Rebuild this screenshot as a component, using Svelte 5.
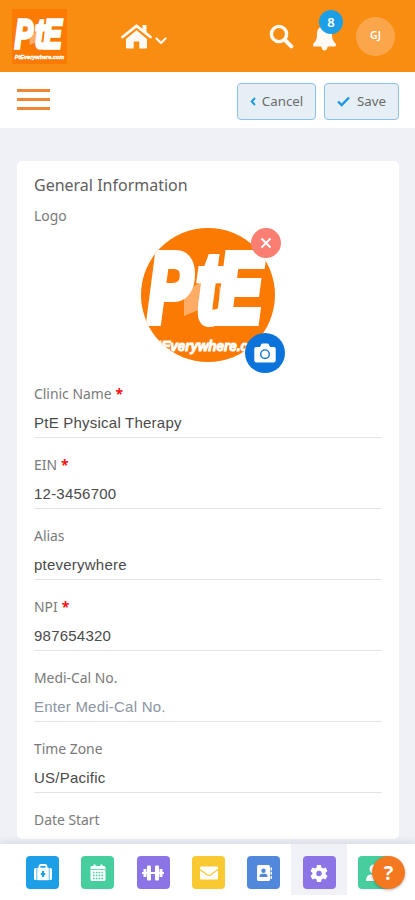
<script lang="ts">
    type Field = {
        label: string;
        value?: string;
        placeholder?: string;
        required?: boolean;
    };

    const fields: Field[] = [
        { label: 'Clinic Name', value: 'PtE Physical Therapy', required: true },
        { label: 'EIN', value: '12-3456700', required: true },
        { label: 'Alias', value: 'pteverywhere' },
        { label: 'NPI', value: '987654320', required: true },
        { label: 'Medi-Cal No.', placeholder: 'Enter Medi-Cal No.' },
        { label: 'Time Zone', value: 'US/Pacific' },
        { label: 'Date Start' },
    ];

    const apps = [
        { id: 'medkit', color: '#1c9fe6' },
        { id: 'calendar', color: '#46ce9f' },
        { id: 'dumbbell', color: '#8c73e6' },
        { id: 'mail', color: '#f8c930' },
        { id: 'contacts', color: '#5288dc' },
        { id: 'settings', color: '#8c73e6' },
        { id: 'user', color: '#46ce9f' },
    ];

    let active = $state('settings');
</script>

{#snippet wordmark()}
    <rect width="134" height="134" fill="#fb7a03" />
    <path d="M43 64 L60 54 L62 80 L43 88Z" fill="#ffad66" />
    <path d="M78 58 L90 67 L78 77Z" fill="#ffa052" />
    <text class="mark" transform="scale(0.68 1)" x="10 82 113" y="94">PtE</text>
    <text class="site" x="7" y="123" textLength="120" lengthAdjust="spacingAndGlyphs">PtEverywhere.com</text>
{/snippet}

<div class="screen">
    <header class="topbar">
        <svg class="brand" viewBox="0 0 134 134">{@render wordmark()}</svg>
        <button class="home" aria-label="Home">
            <svg width="31" height="26" viewBox="0 0 31 26" fill="#fffaf3">
                <path d="M15.5 6.3 L26 15 V23.2 Q26 24.5 24.7 24.5 H18.3 V17.5 H12.7 V24.5 H6.3 Q5 24.5 5 23.2 V15Z" />
                <path d="M1.5 13 L15.5 1.8 L29.5 13" fill="none" stroke="#fffaf3" stroke-width="2.8" stroke-linecap="round" stroke-linejoin="round" />
                <path d="M21.5 1 H25.5 V9 L21.5 6Z" />
            </svg>
            <svg width="12" height="8" viewBox="0 0 12 8" fill="none" stroke="#fffaf3" stroke-width="2.2" stroke-linecap="round" stroke-linejoin="round">
                <path d="M1.5 1.5 L6 6 L10.5 1.5" />
            </svg>
        </button>
        <button class="search" aria-label="Search">
            <svg width="25" height="25" viewBox="0 0 25 25" fill="none" stroke="#fffaf3">
                <circle cx="10" cy="10" r="7.6" stroke-width="3.4" />
                <path d="M16 16 L22.3 22.3" stroke-width="4" stroke-linecap="round" />
            </svg>
        </button>
        <button class="bell" aria-label="Notifications">
            <svg width="25" height="28" viewBox="0 0 25 28" fill="#fffaf3">
                <path d="M12.5 1 C13.5 1 14 2 14 3 C18.3 4 20 7.3 20 11 C20 16.5 21.5 18.5 23.3 20.3 C24.7 22 24 23.6 22.4 23.6 H2.6 C1 23.6 .3 22 1.7 20.3 C3.5 18.5 5 16.5 5 11 C5 7.3 6.7 4 11 3 C11 2 11.5 1 12.5 1Z" />
                <path d="M9.2 23 H15.8 Q15 27.5 12.5 27.5 Q10 27.5 9.2 23Z" />
            </svg>
            <span class="count">8</span>
        </button>
        <span class="avatar">GJ</span>
    </header>

    <div class="toolbar">
        <button class="menu" aria-label="Menu"><i></i><i></i><i></i></button>
        <button class="btn cancel">
            <svg width="6" height="9" viewBox="0 0 6 9" fill="none" stroke="#1c98e0" stroke-width="1.9"><path d="M5 1 L1.7 4.5 L5 8" /></svg>
            <span>Cancel</span>
        </button>
        <button class="btn save">
            <svg width="13" height="11" viewBox="0 0 13 11" fill="none" stroke="#1c98e0" stroke-width="2.4"><path d="M1 5.5 L4.7 9 L12 1.5" /></svg>
            <span>Save</span>
        </button>
    </div>

    <main>
        <section class="card">
            <h1>General Information</h1>
            <div class="label">Logo</div>
            <div class="logo">
                <svg class="picture" viewBox="0 0 134 134">{@render wordmark()}</svg>
                <button class="remove" aria-label="Remove logo">
                    <svg width="12" height="12" viewBox="0 0 12 12" stroke="#fff" stroke-width="2"><path d="M1.5 1.5 L10.5 10.5 M10.5 1.5 L1.5 10.5" /></svg>
                </button>
                <button class="upload" aria-label="Upload logo">
                    <svg width="22" height="20" viewBox="0 0 22 20">
                        <path d="M2 4 H6 L7.4 1 Q7.7 .5 8.3 .5 H13.7 Q14.3 .5 14.6 1 L16 4 H20 Q21.7 4 21.7 5.7 V17.6 Q21.7 19.4 20 19.4 H2 Q.3 19.4 .3 17.6 V5.7 Q.3 4 2 4Z" fill="#fff" />
                        <circle cx="11" cy="11.2" r="4.3" fill="none" stroke="#0b73d9" stroke-width="1.4" />
                    </svg>
                </button>
            </div>

            {#each fields as field}
                <div class="field">
                    <div class="label">{field.label}{#if field.required}<b>*</b>{/if}</div>
                    <div class="value" class:placeholder={!field.value}>{field.value ?? field.placeholder ?? ''}</div>
                </div>
            {/each}
        </section>
    </main>

    <nav>
        {#each apps as app}
            <button class="app" class:active={active === app.id} aria-label={app.id} onclick={() => (active = app.id)}>
                <span class="tile" style="background: {app.color}">
                    <svg width="22" height="20" viewBox="0 0 22 20" fill="#fff">
                        {#if app.id === 'medkit'}
                            <path d="M7.5 5 V3.5 Q7.5 2 9 2 H13 Q14.5 2 14.5 3.5 V5" fill="none" stroke="#fff" stroke-width="1.8" />
                            <path d="M4.5 5 V17 H3.5 Q2 17 2 15.5 V6.5 Q2 5 3.5 5Z M17.5 5 H18.5 Q20 5 20 6.5 V15.5 Q20 17 18.5 17 H17.5Z" />
                            <rect x="5.2" y="4.7" width="11.6" height="12.5" />
                            <path d="M11 8 V14 M8.8 11 H13.2" stroke={app.color} stroke-width="2.2" />
                        {:else if app.id === 'calendar'}
                            <path d="M5 3 H6.5 V1.5 H8.5 V3 H13.5 V1.5 H15.5 V3 H17 Q18.5 3 18.5 4.5 V16.5 Q18.5 18 17 18 H5 Q3.5 18 3.5 16.5 V4.5 Q3.5 3 5 3Z" />
                            <path d="M3.5 6.5 H18.5" stroke={app.color} stroke-width="0.8" />
                            <path d="M6 9.5 H16 M6 12.5 H16 M6 15.5 H16" stroke={app.color} stroke-width="1.4" stroke-dasharray="1.6 1.2" />
                        {:else if app.id === 'dumbbell'}
                            <path d="M0 9 H22 V11 H0Z M1.5 6 H4.5 V14 H1.5Z M17.5 6 H20.5 V14 H17.5Z" />
                            <rect x="5" y="2.5" width="4" height="15" rx="1" />
                            <rect x="13" y="2.5" width="4" height="15" rx="1" />
                        {:else if app.id === 'mail'}
                            <rect x="2" y="3.5" width="18" height="13" rx="1" />
                            <path d="M2 6.5 L9.5 12 Q11 13 12.5 12 L20 6.5" fill="none" stroke={app.color} stroke-width="1.2" />
                        {:else if app.id === 'contacts'}
                            <rect x="4" y="2" width="13" height="16" rx="1.5" />
                            <path d="M17.5 4.5 H19 V7.5 H17.5Z M17.5 8.7 H19 V11.7 H17.5Z M17.5 12.9 H19 V15.9 H17.5Z" />
                            <circle cx="10.5" cy="7.8" r="2.2" fill={app.color} />
                            <path d="M6.5 14 Q6.5 10.8 9 10.8 H12 Q14.5 10.8 14.5 14Z" fill={app.color} />
                        {:else if app.id === 'settings'}
                            <path d="M9 2 H13 L13.5 4.5 L15 5.4 L17.5 4.5 L19.5 8 L17.6 9.7 V11.3 L19.5 13 L17.5 16.5 L15 15.6 L13.5 16.5 L13 19 H9 L8.5 16.5 L7 15.6 L4.5 16.5 L2.5 13 L4.4 11.3 V9.7 L2.5 8 L4.5 4.5 L7 5.4 L8.5 4.5Z" />
                            <circle cx="11" cy="10.5" r="2.7" fill={app.color} />
                        {:else}
                            <circle cx="11" cy="6" r="4.5" />
                            <path d="M3 18 Q3 11.5 8 11.5 H14 Q19 11.5 19 18Z" />
                        {/if}
                    </svg>
                </span>
            </button>
        {/each}
        <button class="help" aria-label="Help">?</button>
    </nav>
</div>

<style>
    :global(body) {
        background: #eff1f6;
    }

    .screen {
        display: flex;
        flex-direction: column;
        width: 415px;
        height: 900px;
        overflow: hidden;
        background: #eff1f6;
        font-family: 'Noto Sans', sans-serif;
        color: #666;
    }

    button {
        padding: 0;
        border: 0;
        background: none;
        font: inherit;
        color: inherit;
        cursor: pointer;
    }

    svg {
        display: block;
        flex: none;
    }

    .topbar {
        display: flex;
        align-items: center;
        flex: none;
        box-sizing: border-box;
        height: 72px;
        padding: 1px 20px 0 12px;
        background: #f98d12;
    }

    .brand {
        width: 55px;
        height: 55px;
    }

    .mark {
        font: italic bold 98px 'Liberation Sans', sans-serif;
        fill: #fff;
        stroke: #fff;
        stroke-width: 8px;
    }

    .site {
        font: italic bold 15px 'Liberation Sans', sans-serif;
        fill: #fff;
        stroke: #fff;
        stroke-width: 1px;
    }

    .home {
        display: flex;
        align-items: center;
        gap: 3px;
        margin: 1px auto 0 54px;
    }

    .home svg + svg {
        margin-top: 8px;
    }

    .search {
        margin-right: 18px;
    }

    .bell {
        position: relative;
        margin-right: 19px;
    }

    .count {
        position: absolute;
        top: -13px;
        left: 7px;
        width: 24px;
        height: 24px;
        border-radius: 50%;
        background: #1c9fe6;
        color: #fff;
        font-size: 13px;
        font-weight: 600;
        line-height: 24px;
        text-align: center;
    }

    .avatar {
        width: 39px;
        height: 39px;
        border-radius: 50%;
        background: #fba64b;
        color: #fff;
        font-size: 10.5px;
        font-weight: 600;
        line-height: 36px;
        text-align: center;
    }

    .toolbar {
        display: flex;
        align-items: center;
        flex: none;
        box-sizing: border-box;
        height: 56px;
        padding: 2px 16px 0 17px;
        background: #fff;
    }

    .menu {
        display: grid;
        gap: 6px;
        margin: -4px auto 0 0;
    }

    .menu i {
        width: 33px;
        height: 3px;
        background: #ef8734;
    }

    .btn {
        display: flex;
        align-items: center;
        justify-content: center;
        box-sizing: border-box;
        height: 37px;
        border: 1px solid #8fc0ea;
        border-radius: 4px;
        background: #e6eff5;
        color: #6b6b6b;
        font-size: 13.3px;
    }

    .cancel {
        gap: 6px;
        width: 79px;
        margin-right: 8px;
    }

    .save {
        gap: 7px;
        width: 75px;
    }

    main {
        flex: 1;
        min-height: 0;
        padding: 33px 16px 5px 17px;
    }

    .card {
        box-sizing: border-box;
        height: 100%;
        padding: 0 17px;
        overflow: hidden;
        border-radius: 5px;
        background: #fff;
    }

    h1 {
        margin: 12px 0 9px;
        color: #606060;
        font-size: 16px;
        font-weight: 400;
        line-height: 24px;
    }

    .label {
        color: #7a7a7a;
        font-size: 13.9px;
        line-height: 20px;
    }

    .label b {
        margin-left: 4px;
        color: #f11;
    }

    .logo {
        position: relative;
        width: 134px;
        height: 134px;
        margin: 2px auto 0;
    }

    .picture {
        width: 134px;
        height: 134px;
        border-radius: 50%;
    }

    .remove,
    .upload {
        position: absolute;
        display: grid;
        place-items: center;
        border-radius: 50%;
    }

    .remove {
        top: 0;
        right: -6px;
        width: 30px;
        height: 30px;
        background: #fa7e72;
    }

    .upload {
        right: -10px;
        bottom: -11px;
        width: 40px;
        height: 40px;
        background: #0b73d9;
    }

    .field {
        height: 71px;
    }

    .logo + .field {
        margin-top: 22px;
    }

    .value {
        height: 34px;
        box-sizing: border-box;
        border-bottom: 1px solid #e2e3e6;
        color: #4a4a4a;
        font: 15px/38px 'Liberation Sans', sans-serif;
        letter-spacing: 0.23px;
    }

    .placeholder {
        color: #8b95a3;
    }

    nav {
        position: relative;
        display: flex;
        flex: none;
        height: 56px;
        padding-left: 15px;
        background: #fff;
        box-shadow: 0 -2px 7px rgba(100, 110, 150, 0.18);
    }

    .app {
        display: flex;
        justify-content: center;
        flex: none;
        width: 55.3px;
        height: 51px;
        padding-top: 12px;
    }

    .app.active {
        background: #f1f2f7;
    }

    .tile {
        display: grid;
        place-items: center;
        width: 33px;
        height: 33px;
        border-radius: 4px;
    }

    .help {
        position: absolute;
        top: 12px;
        right: 10px;
        width: 33px;
        height: 33px;
        border-radius: 50%;
        background: #f47820;
        box-shadow: 0 1px 3px rgba(0, 0, 0, 0.3);
        color: #fff;
        font-size: 20px;
        font-weight: 700;
        line-height: 33px;
    }
</style>
